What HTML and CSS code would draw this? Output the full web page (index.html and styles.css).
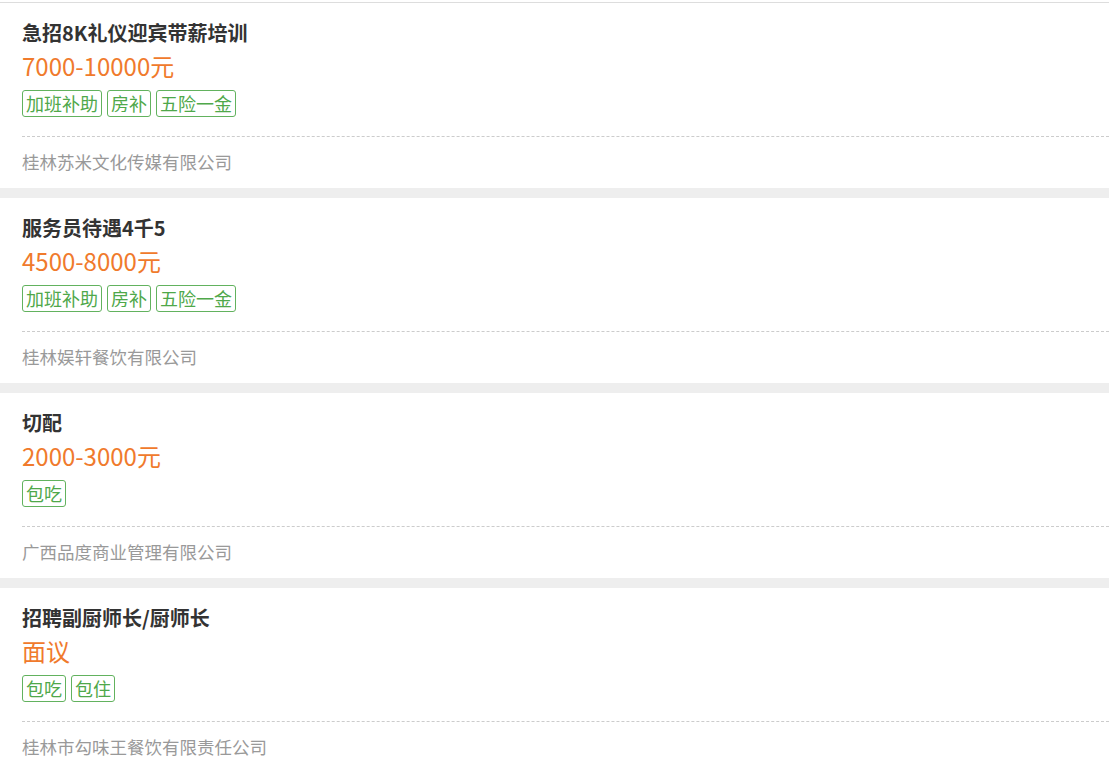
FILE: index.html
```html
<!DOCTYPE html>
<html lang="zh-CN">
  <head>
    <meta charset="UTF-8" />
    <meta name="viewport" content="width=device-width, initial-scale=1.0" />
    <title>职位列表</title>
    <link rel="stylesheet" href="styles.css">
  </head>
  <body>
    <main>
      <section id="job-list">
        <div class="job-card">
          <h3 class="job-title">急招8K礼仪迎宾带薪培训</h3>
          <div class="job-salary">7000-10000元</div>
          <div class="job-tags">
            <span class="tag">加班补助</span>
            <span class="tag">房补</span>
            <span class="tag">五险一金</span>
          </div>
          <div class="job-company">桂林苏米文化传媒有限公司</div>
        </div>
        <div class="job-card">
          <h3 class="job-title">服务员待遇4千5</h3>
          <div class="job-salary">4500-8000元</div>
          <div class="job-tags">
            <span class="tag">加班补助</span>
            <span class="tag">房补</span>
            <span class="tag">五险一金</span>
          </div>
          <div class="job-company">桂林娱轩餐饮有限公司</div>
        </div>
        <div class="job-card">
          <h3 class="job-title">切配</h3>
          <div class="job-salary">2000-3000元</div>
          <div class="job-tags">
            <span class="tag">包吃</span>
          </div>
          <div class="job-company">广西品度商业管理有限公司</div>
        </div>
        <div class="job-card">
          <h3 class="job-title">招聘副厨师长/厨师长</h3>
          <div class="job-salary">面议</div>
          <div class="job-tags">
            <span class="tag">包吃</span>
            <span class="tag">包住</span>
          </div>
          <div class="job-company">桂林市勾味王餐饮有限责任公司</div>
        </div>
      </section>
    </main>
  </body>
</html>
```

FILE: styles.css
```css
body {
  margin: 0;
  background-color: white;
  font-family: "Noto Sans CJK SC", "Noto Sans", sans-serif;
}
#job-list {
  margin-top: 2px;
  border-top: 1px solid #dddddd;
  background-color: #eeeeee;
  display: flex;
  flex-direction: column;
  gap: 10px;
}
.job-card {
  background-color: white;
  padding: 15px 0 1px 22px;
}
.job-title {
  margin: 0;
  font-size: 20px;
  line-height: 30px;
  font-weight: 700;
  color: #333333;
}
.job-salary {
  font-size: 24px;
  line-height: 36px;
  color: #f07a2c;
}
.job-tags {
  margin-top: 6px;
  display: flex;
  gap: 5px;
}
.job-tags .tag {
  border: 1px solid #62b25e;
  border-radius: 3px;
  padding: 0 3px;
  font-size: 18px;
  line-height: 25px;
  color: #4fa84a;
}
.job-company {
  margin-top: 19px;
  border-top: 1px dashed #cccccc;
  font-size: 17.5px;
  line-height: 50px;
  color: #999999;
}
```
